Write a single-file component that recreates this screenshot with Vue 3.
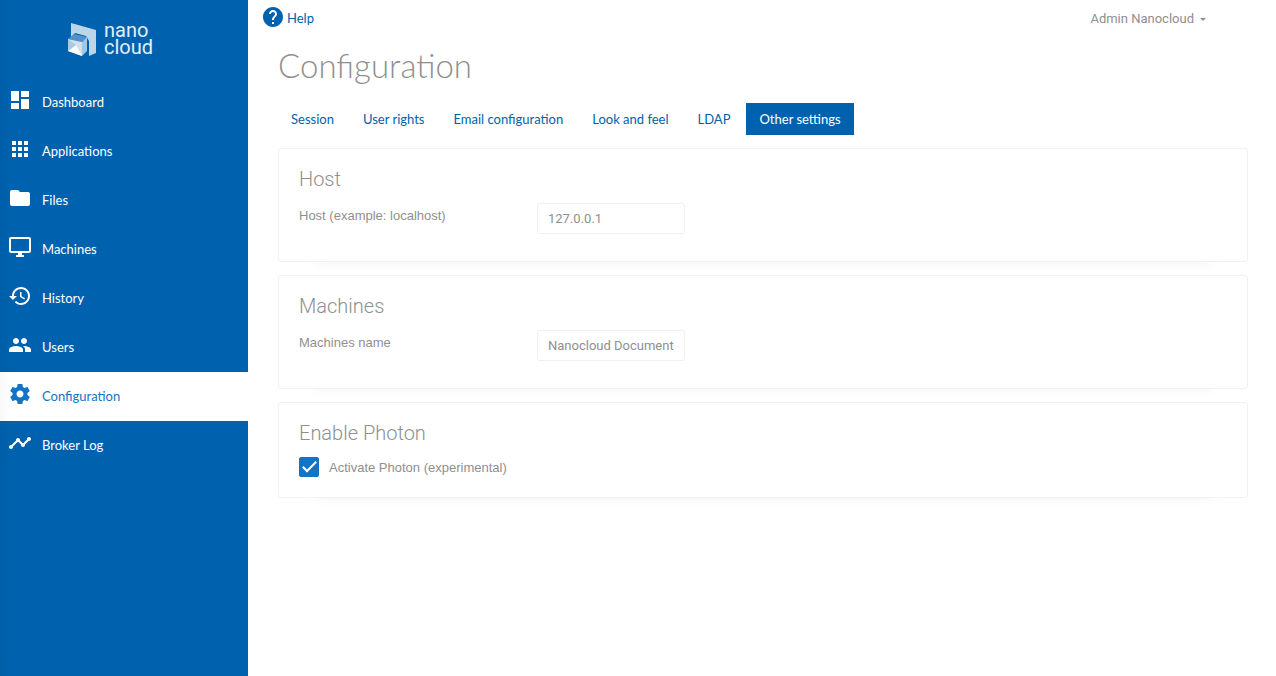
<script setup>
import { ref } from 'vue'

const menu = [
  { name: 'Dashboard', icon: 'M3 13h8V3H3v10zm0 8h8v-6H3v6zm10 0h8V11h-8v10zm0-18v6h8V3h-8z' },
  { name: 'Applications', icon: 'M4 8h4V4H4v4zm6 12h4v-4h-4v4zm-6 0h4v-4H4v4zm0-6h4v-4H4v4zm6 0h4v-4h-4v4zm6-10v4h4V4h-4zm-6 4h4V4h-4v4zm6 6h4v-4h-4v4zm0 6h4v-4h-4v4z' },
  { name: 'Files', icon: 'M10 4H4c-1.1 0-1.99.9-1.99 2L2 18c0 1.1.9 2 2 2h16c1.1 0 2-.9 2-2V8c0-1.1-.9-2-2-2h-8l-2-2z' },
  { name: 'Machines', icon: 'M21 2H3c-1.1 0-2 .9-2 2v12c0 1.1.9 2 2 2h7v2H8v2h8v-2h-2v-2h7c1.1 0 2-.9 2-2V4c0-1.1-.9-2-2-2zm0 14H3V4h18v12z' },
  { name: 'History', icon: 'M13 3c-4.97 0-9 4.03-9 9H1l3.89 3.89.07.14L9 12H6c0-3.87 3.13-7 7-7s7 3.13 7 7-3.13 7-7 7c-1.93 0-3.68-.79-4.94-2.06l-1.42 1.42C8.27 19.99 10.51 21 13 21c4.97 0 9-4.03 9-9s-4.03-9-9-9zm-1 5v5l4.28 2.54.72-1.21-3.5-2.08V8H12z' },
  { name: 'Users', icon: 'M16 11c1.66 0 2.99-1.34 2.99-3S17.66 5 16 5c-1.66 0-3 1.34-3 3s1.34 3 3 3zm-8 0c1.66 0 2.99-1.34 2.99-3S9.66 5 8 5C6.34 5 5 6.34 5 8s1.34 3 3 3zm0 2c-2.33 0-7 1.17-7 3.5V19h14v-2.5c0-2.33-4.67-3.5-7-3.5zm8 0c-.29 0-.62.02-.97.05 1.16.84 1.97 1.97 1.97 3.45V19h6v-2.5c0-2.33-4.67-3.5-7-3.5z' },
  { name: 'Configuration', active: true, icon: 'M19.43 12.98c.04-.32.07-.64.07-.98s-.03-.66-.07-.98l2.11-1.65c.19-.15.24-.42.12-.64l-2-3.46c-.12-.22-.39-.3-.61-.22l-2.49 1c-.52-.4-1.08-.73-1.69-.98l-.38-2.65C14.46 2.18 14.25 2 14 2h-4c-.25 0-.46.18-.49.42l-.38 2.65c-.61.25-1.17.59-1.69.98l-2.49-1c-.23-.09-.49 0-.61.22l-2 3.46c-.13.22-.07.49.12.64l2.11 1.65c-.04.32-.07.65-.07.98s.03.66.07.98l-2.11 1.65c-.19.15-.24.42-.12.64l2 3.46c.12.22.39.3.61.22l2.49-1c.52.4 1.08.73 1.69.98l.38 2.65c.03.24.24.42.49.42h4c.25 0 .46-.18.49-.42l.38-2.65c.61-.25 1.17-.59 1.69-.98l2.49 1c.23.09.49 0 .61-.22l2-3.46c.12-.22.07-.49-.12-.64l-2.11-1.65zM12 15.5c-1.93 0-3.5-1.57-3.5-3.5s1.57-3.5 3.5-3.5 3.5 1.57 3.5 3.5-1.57 3.5-3.5 3.5z' },
  { name: 'Broker Log', icon: 'M23 8c0 1.1-.9 2-2 2-.18 0-.35-.02-.51-.07l-3.56 3.55c.05.16.07.34.07.52 0 1.1-.9 2-2 2s-2-.9-2-2c0-.18.02-.36.07-.52l-2.55-2.55c-.16.05-.34.07-.52.07s-.36-.02-.52-.07l-4.55 4.56c.05.16.07.33.07.51 0 1.1-.9 2-2 2s-2-.9-2-2 .9-2 2-2c.18 0 .35.02.51.07l4.56-4.55C8.02 9.36 8 9.18 8 9c0-1.1.9-2 2-2s2 .9 2 2c0 .18-.02.36-.07.52l2.55 2.55c.16-.05.34-.07.52-.07s.36.02.52.07l3.55-3.56C19.02 8.35 19 8.18 19 8c0-1.1.9-2 2-2s2 .9 2 2z' }
]

const tabs = ['Session', 'User rights', 'Email configuration', 'Look and feel', 'LDAP', 'Other settings']
const currentTab = ref('Other settings')

const host = ref('127.0.0.1')
const machinesName = ref('Nanocloud Document')
const photon = ref(true)
</script>

<template>
  <div class="layout">
    <aside class="sidebar">
      <a class="logo" href="#" aria-label="nano cloud">
        <svg width="30" height="36" viewBox="0 0 30 36" aria-hidden="true">
          <path d="M4 1 L29 8 V31 L22 34 V19 L19 14 L8 11 L4 16 Z" fill="#bcd5e8" />
          <path d="M1 17 L7 12 L20 15 L15 20 Z" fill="#4f92c8" />
          <path d="M1 17 L15 20 L15 34 L1 29 Z" fill="#cfe1ef" />
          <path d="M15 20 L20 15 V29 L15 34 Z" fill="#a3c6e2" />
          <path d="M1 29 L9 23 L15 34 Z" fill="#fff" />
          <path d="M1 17 L9 23 L1 29 Z" fill="#a9cae4" />
        </svg>
        <span class="wordmark"><span>nano</span><span>cloud</span></span>
      </a>
      <nav class="menu">
        <a v-for="item in menu" :key="item.name" href="#" class="menu-item" :class="{ active: item.active }">
          <svg class="icon" viewBox="0 0 24 24" aria-hidden="true"><path :d="item.icon" /></svg>
          <span>{{ item.name }}</span>
        </a>
      </nav>
    </aside>

    <div class="content">
      <header class="topbar">
        <a href="#" class="help">
          <svg class="icon" viewBox="0 0 24 24" aria-hidden="true">
            <path d="M12 2C6.48 2 2 6.48 2 12s4.48 10 10 10 10-4.48 10-10S17.52 2 12 2zm1 17h-2v-2h2v2zm2.07-7.75l-.9.92C13.45 12.9 13 13.5 13 15h-2v-.5c0-1.1.45-2.1 1.17-2.83l1.24-1.26c.37-.36.59-.86.59-1.41 0-1.1-.9-2-2-2s-2 .9-2 2H8c0-2.21 1.79-4 4-4s4 1.79 4 4c0 .88-.36 1.68-.93 2.25z" />
          </svg>
          <span>Help</span>
        </a>
        <button type="button" class="user">Admin Nanocloud<span class="caret"></span></button>
      </header>

      <main class="page">
        <h1>Configuration</h1>
        <nav class="tabs">
          <button
            v-for="tab in tabs"
            :key="tab"
            type="button"
            class="tab"
            :class="{ selected: tab === currentTab }"
            @click="currentTab = tab"
          >{{ tab }}</button>
        </nav>

        <div class="cards">
          <section class="card">
            <h2>Host</h2>
            <div class="field">
              <label for="host">Host (example: localhost)</label>
              <input id="host" v-model="host" type="text">
            </div>
          </section>
          <section class="card">
            <h2>Machines</h2>
            <div class="field">
              <label for="machines-name">Machines name</label>
              <input id="machines-name" v-model="machinesName" type="text">
            </div>
          </section>
          <section class="card">
            <h2>Enable Photon</h2>
            <div class="check">
              <input id="photon" v-model="photon" type="checkbox">
              <label for="photon">Activate Photon (experimental)</label>
            </div>
          </section>
        </div>
      </main>
    </div>
  </div>
</template>

<style>
body {
  margin: 0;
  background: #fff;
}
</style>

<style scoped>
* {
  box-sizing: border-box;
}

a {
  text-decoration: none;
}

.layout {
  display: flex;
  min-height: 100vh;
  font-family: Lato, sans-serif;
  font-size: 13px;
  color: #8f8f8f;
}

.icon {
  width: 24px;
  height: 24px;
  fill: currentColor;
  flex: none;
}

.sidebar {
  position: relative;
  flex: 0 0 248px;
  background: #0062ae;
}

.sidebar::after {
  content: '';
  position: absolute;
  inset: 0;
  pointer-events: none;
  box-shadow: inset 16px -4px 16px -16px rgba(0, 0, 0, 0.06);
}

.logo {
  display: flex;
  height: 78px;
  padding: 22px 0 0 67px;
  gap: 7px;
  color: #e4eef7;
}

.wordmark {
  display: flex;
  flex-direction: column;
  font: 400 20px/17px Roboto, sans-serif;
}

.menu-item {
  display: flex;
  align-items: center;
  height: 49px;
  padding: 0 8px 2px;
  gap: 10px;
  color: #fff;
}

.menu-item .icon {
  margin-bottom: 4px;
}

.menu-item.active {
  background: #fff;
  color: #1374c5;
}

.content {
  flex: 1;
  min-width: 0;
}

.topbar {
  display: flex;
  justify-content: space-between;
  align-items: center;
  height: 36px;
  padding: 0 70px 0 13px;
}

.help {
  display: flex;
  align-items: center;
  gap: 2px;
  color: #0062ae;
}

.help .icon {
  margin-bottom: 2px;
}

.user {
  display: flex;
  align-items: center;
  gap: 6px;
  padding: 2px 0 0;
  border: 0;
  background: none;
  font: 400 13px/20px Roboto, sans-serif;
  color: #8f8f8f;
}

.caret {
  border: 3px solid transparent;
  border-top-color: currentColor;
  border-bottom: 0;
}

.page {
  padding: 8px 28px 28px 30px;
}

h1 {
  margin: 0;
  font-weight: 300;
  font-size: 33px;
  line-height: 42px;
}

.tabs {
  display: flex;
  flex-wrap: wrap;
  gap: 3px;
  margin-top: 17px;
}

.tab {
  height: 32px;
  padding: 0 13px;
  border: 0;
  background: none;
  font: 400 13px/20px Lato, sans-serif;
  color: #0062ae;
}

.tab.selected {
  background: #0062ae;
  color: #fff;
}

.cards {
  display: grid;
  gap: 13px;
  margin-top: 13px;
  font-family: "Liberation Sans", Arial, sans-serif;
}

.card {
  padding: 18px 20px 27px;
  border: 1px solid #f1f1f1;
  border-radius: 3px;
  background: #fff;
  box-shadow: 0 36px 12px -36px rgba(0, 0, 0, 0.05);
}

.card:last-child {
  padding-bottom: 20px;
}

h2 {
  margin: 0 0 12px;
  font-family: Roboto, sans-serif;
  font-weight: 300;
  font-size: 20px;
  line-height: 24px;
}

.field {
  display: flex;
  align-items: flex-start;
}

.field label {
  width: 238px;
  line-height: 25px;
}

.field input {
  width: 148px;
  height: 31px;
  padding: 0 10px;
  border: 1px solid #efefef;
  border-radius: 3px;
  background: #fff;
  font: 400 13px/20px Roboto, sans-serif;
  color: #8f8f8f;
}

.check {
  display: flex;
  align-items: center;
  gap: 10px;
}

.check input {
  display: grid;
  place-items: center;
  appearance: none;
  width: 20px;
  height: 20px;
  margin: 0;
  border: 1px solid #1374c5;
  border-radius: 2px;
}

.check input:checked {
  background: #1374c5;
}

.check input:checked::before {
  content: '';
  width: 5px;
  height: 12px;
  margin-bottom: 4px;
  border: solid #fff;
  border-width: 0 2px 2px 0;
  transform: rotate(45deg);
}
</style>
